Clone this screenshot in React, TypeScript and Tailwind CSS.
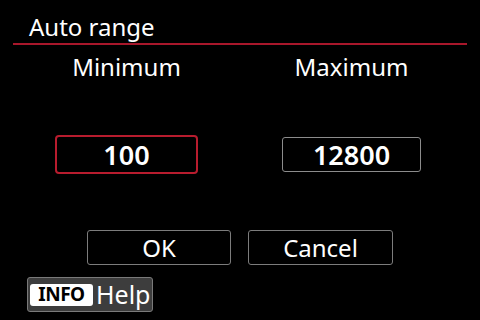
export default function App() {
  return (
    <div className="w-[480px] h-[320px] bg-black text-white overflow-hidden" style={{ fontFamily: '"Noto Sans", "Open Sans", sans-serif' }}>
      {/* Header */}
      <div className="px-[13px] pt-[13px]">
        <div className="pl-[16px] text-[24px] leading-[28px]">Auto range</div>
        <div className="mt-[2px] h-[2px] bg-[#a8172b]" />
      </div>

      {/* Labels + values */}
      <div className="grid grid-cols-[225px_225px] px-[14px] mt-[8px]">
        <div className="flex flex-col items-center">
          <div className="text-[24px] leading-[28px]">Minimum</div>
          <div className="mt-[54px] h-[39px] flex items-center">
            <div className="w-[143px] h-[39px] border-2 border-[#b81c2e] rounded-[4px] flex items-center justify-center text-[27px] font-semibold leading-none">
              100
            </div>
          </div>
        </div>
        <div className="flex flex-col items-center">
          <div className="text-[24px] leading-[28px]">Maximum</div>
          <div className="mt-[54px] h-[39px] flex items-center">
            <div className="w-[139px] h-[35px] border border-[#8c8c8c] rounded-[3px] flex items-center justify-center text-[27px] font-semibold leading-none">
              12800
            </div>
          </div>
        </div>
      </div>

      {/* Buttons */}
      <div className="flex justify-center gap-[17px] mt-[56px]">
        <div className="w-[144px] h-[35px] border border-[#7c7c7c] rounded-[3px] flex items-center justify-center text-[24px] leading-none">
          OK
        </div>
        <div className="w-[145px] h-[35px] border border-[#7c7c7c] rounded-[3px] flex items-center justify-center text-[24px] leading-none">
          Cancel
        </div>
      </div>

      {/* Help */}
      <div className="pl-[27px] mt-[12px]">
        <div className="inline-flex items-center w-[126px] h-[35px] bg-[#3d3d3d] border border-[#7a7a7a] rounded-[3px] pl-[2px]">
          <div className="w-[63px] h-[22px] bg-white rounded-[3px] text-black text-[19px] font-bold leading-none flex items-center justify-center tracking-[-0.5px]">
            INFO
          </div>
          <div className="ml-[3px] text-[25px] leading-none">Help</div>
        </div>
      </div>
    </div>
  );
}
